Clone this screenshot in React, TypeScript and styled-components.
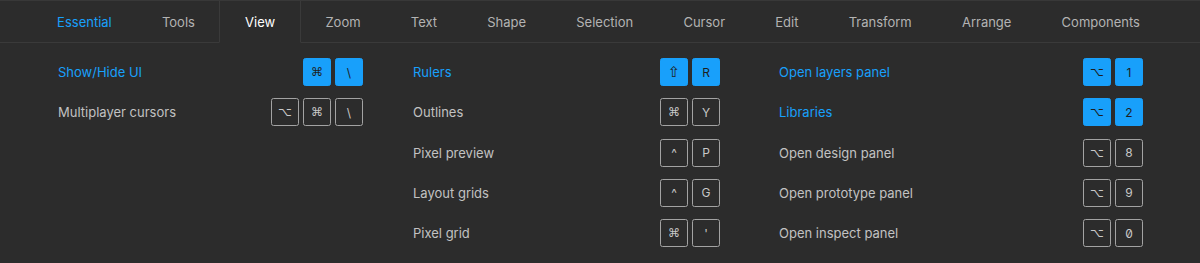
import styled, { createGlobalStyle } from 'styled-components'

const GlobalStyle = createGlobalStyle`
  html, body {
    margin: 0;
    padding: 0;
    background: #2c2c2c;
  }
  body {
    font-family: Inter, 'Noto Sans', sans-serif;
    -webkit-font-smoothing: antialiased;
  }
`

const Panel = styled.div`
  width: 1200px;
  height: 263px;
  background: #2c2c2c;
  overflow: hidden;
`

const TabBar = styled.div`
  display: flex;
  height: 43px;
  padding-left: 32px;
  box-sizing: border-box;
  border-top: 1px solid #383838;
  border-bottom: 1px solid #3a3a3a;
`

const Tab = styled.div<{ $active?: boolean; $highlight?: boolean }>`
  display: flex;
  align-items: center;
  padding: 0 25.1px;
  margin: 0 -1px -1px;
  font-size: 13px;
  color: ${({ $active, $highlight }) => ($highlight ? '#18a0fb' : $active ? '#ffffff' : '#b3b3b3')};
  border-left: 1px solid ${({ $active }) => ($active ? '#3a3a3a' : 'transparent')};
  border-right: 1px solid ${({ $active }) => ($active ? '#3a3a3a' : 'transparent')};
  border-bottom: 1px solid ${({ $active }) => ($active ? '#2c2c2c' : 'transparent')};
`

const Columns = styled.div`
  display: grid;
  grid-template-columns: 355px 366px 364px;
  padding: 15px 0 0 58px;
`

const Column = styled.div<{ $gutter: number }>`
  display: flex;
  flex-direction: column;
  gap: 12.25px;
  padding-right: ${({ $gutter }) => $gutter}px;
`

const Row = styled.div`
  display: flex;
  align-items: center;
  justify-content: space-between;
  height: 28px;
`

const Label = styled.span<{ $accent?: boolean }>`
  font-size: 13px;
  color: ${({ $accent }) => ($accent ? '#18a0fb' : '#c2c2c2')};
`

const Keys = styled.div`
  display: flex;
  gap: 4px;
`

const Key = styled.span<{ $accent?: boolean }>`
  display: flex;
  align-items: center;
  justify-content: center;
  width: 28px;
  height: 28px;
  box-sizing: border-box;
  border-radius: 2.5px;
  font-family: Inter, 'DejaVu Sans', sans-serif;
  font-size: 12px;
  font-feature-settings: 'zero' 1;
  color: ${({ $accent }) => ($accent ? '#1e1e1e' : '#c8c8c8')};
  background: ${({ $accent }) => ($accent ? '#18a0fb' : 'transparent')};
  border: 1px solid ${({ $accent }) => ($accent ? '#18a0fb' : '#a3a3a3')};
`

const Sym = styled.span<{ $big?: boolean }>`
  font-family: 'DejaVu Sans', sans-serif;
  font-size: ${({ $big }) => ($big ? 15 : 12)}px;
`

type Shortcut = { label: string; keys: string[]; accent?: boolean }

const symbols = ['⌘', '⌥', '⇧']

const columns: { gutter: number; items: Shortcut[] }[] = [
  {
    gutter: 50,
    items: [
      { label: 'Show/Hide UI', keys: ['⌘', '\\'], accent: true },
      { label: 'Multiplayer cursors', keys: ['⌥', '⌘', '\\'] },
    ],
  },
  {
    gutter: 59,
    items: [
      { label: 'Rulers', keys: ['⇧', 'R'], accent: true },
      { label: 'Outlines', keys: ['⌘', 'Y'] },
      { label: 'Pixel preview', keys: ['^', 'P'] },
      { label: 'Layout grids', keys: ['^', 'G'] },
      { label: 'Pixel grid', keys: ['⌘', "'"] },
    ],
  },
  {
    gutter: 0,
    items: [
      { label: 'Open layers panel', keys: ['⌥', '1'], accent: true },
      { label: 'Libraries', keys: ['⌥', '2'], accent: true },
      { label: 'Open design panel', keys: ['⌥', '8'] },
      { label: 'Open prototype panel', keys: ['⌥', '9'] },
      { label: 'Open inspect panel', keys: ['⌥', '0'] },
    ],
  },
]

const tabs = [
  'Essential',
  'Tools',
  'View',
  'Zoom',
  'Text',
  'Shape',
  'Selection',
  'Cursor',
  'Edit',
  'Transform',
  'Arrange',
  'Components',
]

const App = () => {
  return (
    <Panel>
      <GlobalStyle />
      <TabBar>
        {tabs.map((t) => (
          <Tab key={t} $active={t === 'View'} $highlight={t === 'Essential'}>
            {t}
          </Tab>
        ))}
      </TabBar>
      <Columns>
        {columns.map((col, i) => (
          <Column key={i} $gutter={col.gutter}>
            {col.items.map((item) => (
              <Row key={item.label}>
                <Label $accent={item.accent}>{item.label}</Label>
                <Keys>
                  {item.keys.map((k, j) => (
                    <Key key={j} $accent={item.accent}>
                      {symbols.includes(k) ? <Sym $big={k === '⇧'}>{k}</Sym> : k}
                    </Key>
                  ))}
                </Keys>
              </Row>
            ))}
          </Column>
        ))}
      </Columns>
    </Panel>
  )
}

export default App
